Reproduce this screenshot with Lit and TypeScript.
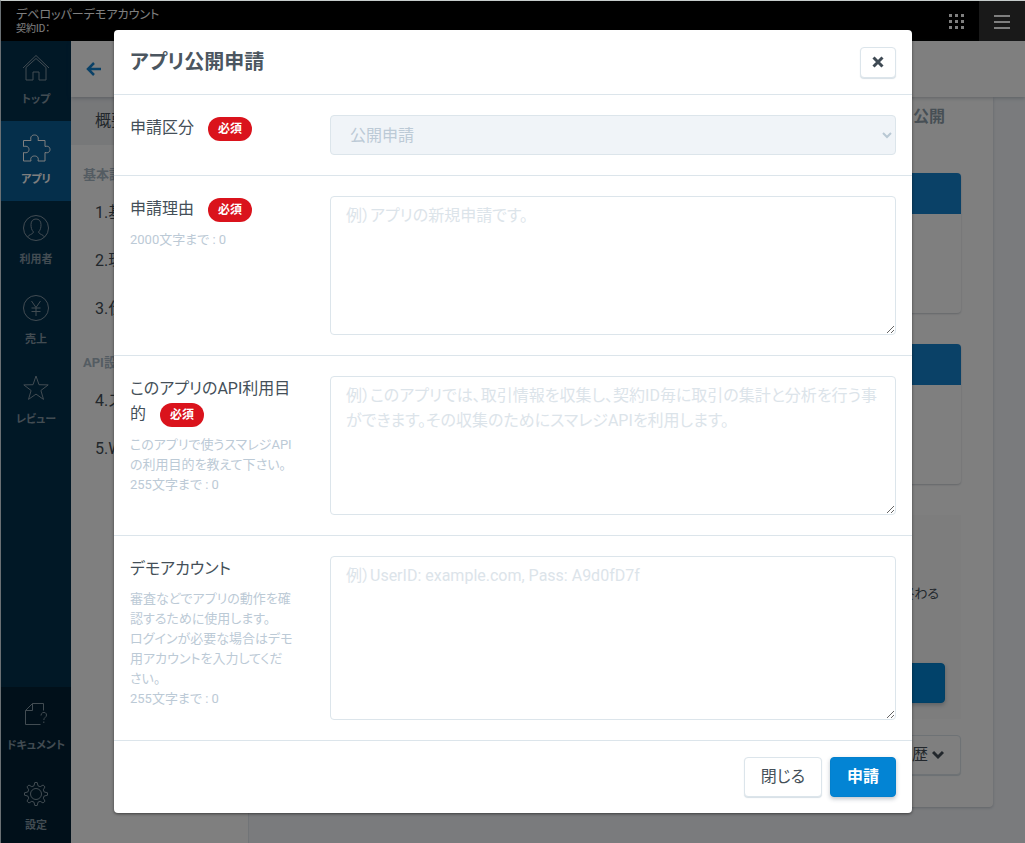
import { LitElement, html, css, svg, nothing, type TemplateResult } from "lit";
import { customElement, property, state } from "lit/decorators.js";
import { classMap } from "lit/directives/class-map.js";

const icons: Record<string, TemplateResult> = {
  home: svg`<path d="M2 15 15 2.500 28 15"/><path d="M5 14.500V27h7v-8h6v8h7V14.500L15 5.500Z"/>`,
  puzzle: svg`<path d="M2.500 7.500h7.500c-1-4 1-5.500 3.500-5.500s4.500 1.500 3.500 5.500h7v6c3.500-1 5 1 5 3s-1.500 4-5 3v8.500h-7c1-3.500-1-5-3.500-5s-4.500 1.500-3.500 5h-7.500V19.500c4 1 5.500-1 5.500-3s-1.500-4-5.500-3Z"/>`,
  user: svg`<circle cx="15" cy="15" r="12.500"/><path d="M6.500 24c1-2.500 5.500-2.500 6-5-2-2-2.500-4.500-2.500-7.500 0-3.500 2-5.500 5-5.500s5 2 5 5.500c0 3-.5 5.500-2.500 7.500.5 2.500 5 2.500 6 5"/>`,
  yen: svg`<circle cx="15" cy="15" r="12.500"/><path d="m10.500 8 4.500 6.500L19.500 8M15 14.500V23M10.500 15h9M10.500 18.500h9"/>`,
  star: svg`<path d="m15 3 3 8.700 9.200.2-7.300 5.600 2.600 8.900L15 21.100l-7.500 5.300 2.600-8.900-7.300-5.600 9.200-.2Z"/>`,
  docs: svg`<path d="M19.500 25.500H4.500V11.500l7-7h11v7"/><path d="M4.500 11.500h7v-7"/><path d="M20 16.500c0-4 5.500-4 5.500-.5 0 2.500-2.700 2.300-2.700 5M22.800 22.500V24"/>`,
  gear: svg`<circle cx="15" cy="15" r="5.500"/><path d="m13.800 3.500h2.400l.8 3.300 2.200.9 2.900-1.700 1.900 1.900-1.700 2.900.9 2.200 3.300.8v2.400l-3.300.8-.9 2.200 1.700 2.900-1.900 1.900-2.900-1.700-2.200.9-.8 3.300h-2.400l-.8-3.300-2.200-.9-2.900 1.700-1.900-1.900 1.700-2.900-.9-2.200-3.300-.8v-2.400l3.300-.8.9-2.200-1.700-2.900 1.900-1.900 2.900 1.700 2.200-.9Z"/>`,
};

const font = css`
  :host {
    font-family: Roboto, "Noto Sans CJK JP", sans-serif;
    font-feature-settings: "palt";
  }
  *,
  *::before {
    box-sizing: border-box;
  }
`;

@customElement("side-nav")
class SideNav extends LitElement {
  static styles = [
    font,
    css`
      :host {
        display: block;
        width: 70px;
        flex: none;
      }
      nav {
        height: 100%;
        display: flex;
        flex-direction: column;
        background: #02304d;
      }
      .group {
        display: flex;
        flex-direction: column;
      }
      .lower {
        margin-top: auto;
        background: #022134;
      }
      .item {
        height: 80px;
        padding-top: 12px;
        display: flex;
        flex-direction: column;
        align-items: center;
        color: #8598a5;
        font-size: 11px;
        line-height: 18px;
        font-weight: 700;
        text-decoration: none;
        white-space: nowrap;
      }
      .lower .item:last-child {
        height: 76px;
      }
      .active {
        background: #0a5e96;
        color: #fff;
      }
      svg {
        width: 30px;
        height: 30px;
        margin-bottom: 8px;
        fill: none;
        stroke: currentColor;
        stroke-width: 1;
      }
    `,
  ];

  private item(icon: string, label: string, active = false) {
    return html`<a class=${classMap({ item: true, active })} href="#${icon}">
      <svg viewBox="0 0 30 30" aria-hidden="true">${icons[icon]}</svg>${label}
    </a>`;
  }

  render() {
    return html`<nav>
      <div class="group">
        ${this.item("home", "トップ")} ${this.item("puzzle", "アプリ", true)}
        ${this.item("user", "利用者")} ${this.item("yen", "売上")}
        ${this.item("star", "レビュー")}
      </div>
      <div class="group lower">
        ${this.item("docs", "ドキュメント")} ${this.item("gear", "設定")}
      </div>
    </nav>`;
  }
}

@customElement("form-row")
class FormRow extends LitElement {
  @property() label = "";
  @property() placeholder = "";
  @property() options = "";
  @property({ attribute: false }) help: string[] = [];
  @property({ type: Boolean }) required = false;
  @property({ type: Number }) rows = 5;
  @property({ type: Number }) limit = 0;
  @state() private count = 0;

  static styles = [
    font,
    css`
      :host {
        display: grid;
        grid-template-columns: 164px 1fr;
        gap: 36px;
        padding: 20px 16px;
        border-bottom: 1px solid #dce5eb;
      }
      label {
        display: block;
        font-size: 16px;
        line-height: 25px;
        color: #444f58;
      }
      .badge {
        display: inline-block;
        vertical-align: middle;
        height: 24px;
        margin: 0 0 0 10px;
        padding: 0 10px;
        border-radius: 12px;
        background: #da131c;
        color: #fff;
        font-size: 12px;
        font-weight: 700;
        line-height: 24px;
      }
      .help {
        margin: 8px 0 0;
        font-size: 13px;
        line-height: 20px;
        color: #bccad6;
      }
      textarea,
      select {
        display: block;
        width: 100%;
        border: 1px solid #dce5eb;
        border-radius: 4px;
        font: inherit;
        font-feature-settings: inherit;
        font-size: 16px;
        line-height: 25px;
        color: #444f58;
        background: #fff;
      }
      textarea {
        padding: 6px 15px;
        resize: vertical;
      }
      textarea::placeholder {
        color: #dce4ea;
      }
      .select {
        display: grid;
        align-items: center;
      }
      .select > * {
        grid-area: 1 / 1;
      }
      select {
        appearance: none;
        height: 40px;
        padding: 0 19px;
        background: #f0f4f8;
        color: #bccad6;
        opacity: 1;
      }
      svg {
        justify-self: end;
        margin-right: 4px;
        width: 10px;
        height: 8px;
        fill: none;
        stroke: #b9c8d4;
        stroke-width: 2;
        pointer-events: none;
      }
    `,
  ];

  private onInput(e: Event) {
    this.count = (e.target as HTMLTextAreaElement).value.length;
  }

  render() {
    return html`
      <div>
        <label for="field"
          >${this.label}${this.required
            ? html` <span class="badge">必須</span>`
            : nothing}</label
        >
        ${this.limit
          ? html`<p class="help">
              ${this.help.map((line) => html`${line}<br />`)}${this.limit}文字まで : ${this.count}
            </p>`
          : nothing}
      </div>
      ${this.options
        ? html`<div class="select">
            <select id="field" disabled>
              <option>${this.options}</option>
            </select>
            <svg viewBox="0 0 10 8" aria-hidden="true"><path d="m1 2 4 4 4-4" /></svg>
          </div>`
        : html`<textarea
            id="field"
            rows=${this.rows}
            placeholder=${this.placeholder}
            @input=${this.onInput}
          ></textarea>`}
    `;
  }
}

@customElement("app-root")
class AppRoot extends LitElement {
  static styles = [
    font,
    css`
      :host {
        position: relative;
        display: flex;
        flex-direction: column;
        box-sizing: border-box;
        height: 100vh;
        overflow: hidden;
        border-top: 1px solid #c6cccb;
        border-left: 1px solid #6a7074;
        color: #444f58;
        font-size: 16px;
      }
      button {
        font: inherit;
        font-feature-settings: inherit;
        color: inherit;
      }
      .topbar {
        flex: none;
        display: flex;
        height: 40px;
        background: #000;
        color: #fff;
      }
      .account {
        flex: 1;
        padding: 6px 15px 0;
        font-size: 12px;
        line-height: 17px;
      }
      .contract {
        font-size: 10px;
        line-height: 10px;
      }
      .tool {
        width: 46px;
        padding: 2px 0 0;
        border: 0;
        display: grid;
        place-items: center;
        background: none;
      }
      .tool svg {
        width: 16px;
        height: 16px;
        fill: currentColor;
      }
      .menu {
        background: #333;
      }
      .body {
        flex: 1;
        min-height: 0;
        display: flex;
      }
      .main {
        flex: 1;
        min-width: 0;
        display: flex;
        flex-direction: column;
      }
      .crumb {
        flex: none;
        position: relative;
        display: flex;
        align-items: center;
        height: 56px;
        padding: 0 15px;
        background: #fff;
        box-shadow: 0 1px 4px rgba(40, 60, 80, 0.3);
      }
      .crumb svg {
        display: block;
        width: 16px;
        height: 16px;
        fill: none;
        stroke: #1482cf;
        stroke-width: 2.500;
      }
      .columns {
        flex: 1;
        min-height: 0;
        display: flex;
        background: #f4f7fb;
      }
      .toc {
        width: 178px;
        flex: none;
        background: #fff;
        border-right: 1px solid #e3e9ee;
      }
      .toc a {
        display: block;
        padding: 0 24px;
        line-height: 48px;
        color: inherit;
        text-decoration: none;
      }
      .toc .current {
        background: #eef0f3;
      }
      .toc h3 {
        margin: 0;
        padding: 18px 12px 2px;
        font-size: 13px;
        line-height: 24px;
        color: #a9b8c5;
      }
      .content {
        flex: 1;
        padding: 0 32px 0 16px;
      }
      .card {
        padding: 0 32px 32px;
        border-radius: 0 0 4px 4px;
        background: #fff;
        box-shadow: 0 1px 3px rgba(40, 60, 80, 0.25);
      }
      .tabs {
        padding: 8px 16px 44px;
        line-height: 24px;
        font-weight: 700;
        color: #8f9fab;
        text-align: right;
      }
      .box {
        height: 140px;
        margin-bottom: 31px;
        overflow: hidden;
        border-radius: 4px;
        box-shadow: 0 1px 2px rgba(40, 60, 80, 0.25);
      }
      .box::before {
        content: "";
        display: block;
        height: 41px;
        background: #1482cf;
      }
      .notice {
        margin-bottom: 16px;
        height: 204px;
        padding: 69px 16px 16px;
        display: flex;
        flex-direction: column;
        justify-content: space-between;
        align-items: flex-end;
        background: #fafafa;
      }
      .notice p {
        margin: 0;
        padding-right: 6px;
        font-size: 13px;
        line-height: 20px;
      }
      .btn {
        height: 40px;
        padding: 0 16px;
        border: 1px solid #dce5eb;
        border-radius: 4px;
        background: #fff;
        line-height: 24px;
        box-shadow: 0 1px 1px rgba(120, 150, 170, 0.3);
      }
      .primary {
        border-color: #0380cd;
        background: #0384d4;
        color: #fff;
        font-weight: 700;
        box-shadow: 0 2px 4px rgba(40, 60, 80, 0.3);
      }
      .wide {
        width: 200px;
      }
      .history {
        display: flex;
        align-items: center;
        gap: 4px;
        margin-left: auto;
      }
      .history svg {
        width: 12px;
        height: 10px;
        fill: none;
        stroke: currentColor;
        stroke-width: 3;
      }
      .backdrop {
        position: absolute;
        inset: 0;
        padding: 29px 16px;
        overflow: auto;
        background: rgba(0, 0, 0, 0.5);
      }
      .dialog {
        max-width: 798px;
        margin: 0 auto;
        border-radius: 4px;
        background: #fff;
        box-shadow: 0 1px 3px rgba(0, 0, 0, 0.5);
      }
      .dialog header {
        display: flex;
        align-items: center;
        justify-content: space-between;
        height: 65px;
        padding: 0 16px;
        border-bottom: 1px solid #dce5eb;
      }
      h2 {
        margin: 0;
        font-size: 20px;
        line-height: 30px;
        font-weight: 700;
        color: #4b5660;
      }
      .close {
        width: 36px;
        height: 31px;
        padding: 0;
        display: grid;
        place-items: center;
      }
      .close svg {
        width: 12px;
        height: 12px;
        stroke: #3f4a54;
        stroke-width: 3;
      }
      .dialog footer {
        display: flex;
        justify-content: flex-end;
        gap: 8px;
        padding: 16px;
      }
    `,
  ];

  render() {
    return html`
      <div class="topbar">
        <div class="account">
          デベロッパーデモアカウント
          <div class="contract">契約ID：</div>
        </div>
        <button class="tool" aria-label="アプリ一覧">
          <svg viewBox="0 0 16 16">
            ${[0, 6, 12].map((y) =>
              [1, 7, 13].map((x) => svg`<rect x=${x} y=${y} width="3" height="3" />`),
            )}
          </svg>
        </button>
        <button class="tool menu" aria-label="メニュー">
          <svg viewBox="0 0 16 16"><path d="M0 1h16v2H0zM0 7h16v2H0zM0 13h16v2H0z" /></svg>
        </button>
      </div>
      <div class="body">
        <side-nav></side-nav>
        <div class="main">
          <div class="crumb">
            <a href="#back" aria-label="戻る"
              ><svg viewBox="0 0 16 16"><path d="M15 8H2.500M8 2 2 8l6 6" /></svg
            ></a>
          </div>
          <div class="columns">
            <div class="toc">
              <a class="current" href="#summary">概要</a>
              <h3>基本設定</h3>
              <a href="#s1">1.基</a>
              <a href="#s2">2.環</a>
              <a href="#s3">3.仕</a>
              <h3>API設定</h3>
              <a href="#s4">4.ス</a>
              <a href="#s5">5.W</a>
            </div>
            <div class="content">
              <div class="card">
                <div class="tabs">公開</div>
                <div class="box"></div>
                <div class="box"></div>
                <div class="notice">
                  <p>終わる</p>
                  <button class="btn primary wide" aria-label="申請"></button>
                </div>
                <button class="btn history">
                  履歴<svg viewBox="0 0 12 10"><path d="m1 2 5 5 5-5" /></svg>
                </button>
              </div>
            </div>
          </div>
        </div>
      </div>
      <div class="backdrop">
        <div class="dialog" role="dialog" aria-labelledby="title">
          <header>
            <h2 id="title">アプリ公開申請</h2>
            <button class="btn close" aria-label="閉じる">
              <svg viewBox="0 0 12 12"><path d="m1.500 1.500 9 9M10.500 1.500l-9 9" /></svg>
            </button>
          </header>
          <form-row label="申請区分" required options="公開申請"></form-row>
          <form-row
            label="申請理由"
            required
            limit="2000"
            placeholder="例）アプリの新規申請です。"
          ></form-row>
          <form-row
            label="このアプリのAPI利用目的"
            required
            limit="255"
            .help=${["このアプリで使うスマレジAPIの利用目的を教えて下さい。"]}
            placeholder="例）このアプリでは、取引情報を収集し、契約ID毎に取引の集計と分析を行う事ができます。その収集のためにスマレジAPIを利用します。"
          ></form-row>
          <form-row
            label="デモアカウント"
            rows="6"
            limit="255"
            .help=${[
              "審査などでアプリの動作を確認するために使用します。",
              "ログインが必要な場合はデモ用アカウントを入力してください。",
            ]}
            placeholder="例）UserID: example.com, Pass: A9d0fD7f"
          ></form-row>
          <footer>
            <button class="btn">閉じる</button>
            <button class="btn primary">申請</button>
          </footer>
        </div>
      </div>
    `;
  }
}
